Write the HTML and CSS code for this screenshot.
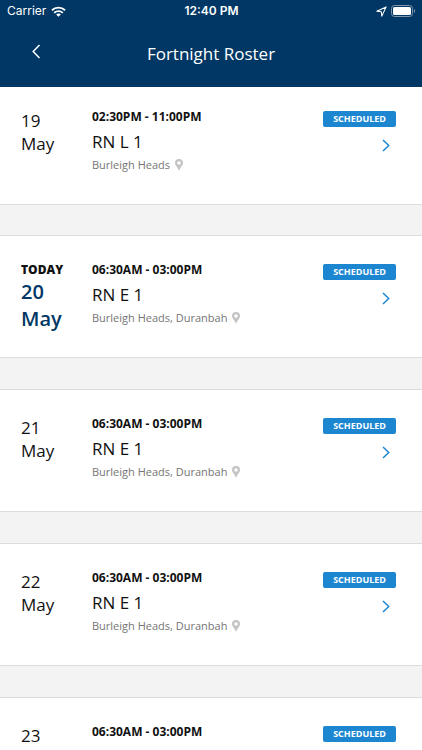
FILE: index.html
```html
<!DOCTYPE html>
<html lang="en">
<head>
<meta charset="utf-8">
<meta name="viewport" content="width=device-width, initial-scale=1">
<title>Fortnight Roster</title>
<link rel="stylesheet" href="styles.css">
</head>
<body>
<svg class="defs" aria-hidden="true">
  <symbol id="pin" viewBox="0 0 8 12"><path fill-rule="evenodd" d="M4 0a4 4 0 0 0-4 4c0 2.500 2.600 4 4 8 1.400-4 4-5.500 4-8a4 4 0 0 0-4-4zm0 2.200a1.800 1.800 0 1 1 0 3.600 1.800 1.800 0 0 1 0-3.600z"/></symbol>
  <symbol id="next" viewBox="0 0 8 13"><path d="M1 1l5.700 5.500L1 12"/></symbol>
</svg>
<header class="header">
  <div class="status">
    <div class="carrier">
      <span>Carrier</span>
      <svg class="wifi" viewBox="0 0 16 11" aria-hidden="true"><path d="M1 4.200a10.200 10.200 0 0 1 14 0M3.400 6.900a6.700 6.700 0 0 1 9.200 0"/><path class="dot" d="M5.500 8.800a3.600 3.600 0 0 1 5 0L8 11z"/></svg>
    </div>
    <span class="clock">12:40 PM</span>
    <div class="power">
      <svg class="location" viewBox="0 0 10 10" aria-hidden="true"><path d="M9.200.8L.8 4.700l4 .5.500 4z"/></svg>
      <svg class="battery" viewBox="0 0 25 12" aria-hidden="true"><rect class="shell" x=".5" y=".5" width="21" height="11" rx="3"/><rect class="charge" x="2" y="2" width="18" height="8" rx="1.500"/><path class="tip" d="M23 4c1.600.6 1.600 3.400 0 4z"/></svg>
    </div>
  </div>
  <nav class="bar">
    <button class="back" type="button" aria-label="Back"><svg viewBox="0 0 9 15" aria-hidden="true"><path d="M7.500 1L1.200 7.500l6.300 6.500"/></svg></button>
    <h1>Fortnight Roster</h1>
  </nav>
</header>
<main class="roster">
  <article class="shift">
    <div class="date"><span>19</span><span>May</span></div>
    <div class="info"><strong>02:30PM - 11:00PM</strong><h2>RN L 1</h2><p>Burleigh Heads<svg class="pin" aria-hidden="true"><use href="#pin"/></svg></p></div>
    <div class="side"><span class="badge">SCHEDULED</span><button class="open" type="button" aria-label="Open 19 May"><svg><use href="#next"/></svg></button></div>
  </article>
  <article class="shift">
    <div class="date today"><strong>TODAY</strong><span>20</span><span>May</span></div>
    <div class="info"><strong>06:30AM - 03:00PM</strong><h2>RN E 1</h2><p>Burleigh Heads, Duranbah<svg class="pin" aria-hidden="true"><use href="#pin"/></svg></p></div>
    <div class="side"><span class="badge">SCHEDULED</span><button class="open" type="button" aria-label="Open 20 May"><svg><use href="#next"/></svg></button></div>
  </article>
  <article class="shift">
    <div class="date"><span>21</span><span>May</span></div>
    <div class="info"><strong>06:30AM - 03:00PM</strong><h2>RN E 1</h2><p>Burleigh Heads, Duranbah<svg class="pin" aria-hidden="true"><use href="#pin"/></svg></p></div>
    <div class="side"><span class="badge">SCHEDULED</span><button class="open" type="button" aria-label="Open 21 May"><svg><use href="#next"/></svg></button></div>
  </article>
  <article class="shift">
    <div class="date"><span>22</span><span>May</span></div>
    <div class="info"><strong>06:30AM - 03:00PM</strong><h2>RN E 1</h2><p>Burleigh Heads, Duranbah<svg class="pin" aria-hidden="true"><use href="#pin"/></svg></p></div>
    <div class="side"><span class="badge">SCHEDULED</span><button class="open" type="button" aria-label="Open 22 May"><svg><use href="#next"/></svg></button></div>
  </article>
  <article class="shift">
    <div class="date"><span>23</span></div>
    <div class="info"><strong>06:30AM - 03:00PM</strong></div>
    <div class="side"><span class="badge">SCHEDULED</span></div>
  </article>
</main>
</body>
</html>
```
FILE: styles.css
```css
* { box-sizing: border-box; }

body {
  margin: 0;
  height: 100vh;
  display: flex;
  flex-direction: column;
  overflow: hidden;
  background: #f3f3f3;
  color: #111;
  font-family: "Open Sans", "Noto Sans", sans-serif;
}

h1, h2, p { margin: 0; font-weight: 400; }
button { padding: 0; border: 0; background: none; }
svg { display: block; fill: none; }
.defs { display: none; }

.header {
  flex: none;
  background: #003764;
  color: #fff;
  padding-bottom: 16px;
}

.status {
  display: grid;
  grid-template-columns: 1fr auto 1fr;
  align-items: center;
  height: 22px;
  padding: 0 6px 0 7px;
  font: 12px/22px Inter, "Liberation Sans", sans-serif;
}
.carrier, .power { display: flex; align-items: center; gap: 5px; }
.power { justify-content: flex-end; gap: 4px; }
.clock { font-weight: 600; }
.wifi { width: 15px; height: 11px; stroke: #fff; stroke-width: 2; }
.wifi .dot { fill: #fff; stroke: none; }
.location { width: 11px; height: 11px; stroke: #fff; stroke-linejoin: round; }
.battery { width: 25px; height: 12px; }
.shell { stroke: #8097ad; }
.charge { fill: #fff; }
.tip { fill: #8097ad; }

.bar {
  display: grid;
  grid-template-columns: 52px 1fr 52px;
  align-items: center;
  height: 49px;
  padding-top: 14px;
}
.back { justify-self: end; width: 32px; height: 32px; margin-top: -4px; }
.back svg { width: 9px; height: 15px; margin: auto; stroke: #fff; stroke-width: 1.500; }
h1 { font-size: 17px; line-height: 24px; text-align: center; }

.roster {
  flex: 1;
  min-height: 0;
  overflow-y: auto;
  scrollbar-width: none;
}
.shift {
  display: grid;
  grid-template-columns: 71px 1fr auto;
  min-height: 123px;
  margin-bottom: 31px;
  padding: 26px 26px 24px 21px;
  background: #fff;
  border: solid #dcdcdc;
  border-width: 1px 0;
}
.shift:first-child {
  min-height: 118px;
  margin-bottom: 30px;
  padding-top: 22px;
  border-top: 0;
}

.date { display: flex; flex-direction: column; font-size: 17px; line-height: 23px; }
.today { color: #003764; font-size: 20px; line-height: 27px; font-weight: 600; }
.today strong { color: #111; font-size: 12px; line-height: 16px; }

.info strong { display: block; font-size: 12px; line-height: 16px; margin-bottom: 5px; }
h2 { font-size: 17px; line-height: 24px; }
.info p {
  display: flex;
  align-items: center;
  gap: 5px;
  margin-top: 3px;
  color: #757575;
  font-size: 11px;
  line-height: 16px;
}
.pin { width: 8px; height: 12px; fill: #c4c4c4; }

.side { display: flex; flex-direction: column; align-items: flex-end; }
.badge {
  padding: 0 10px;
  margin-top: 2px;
  border-radius: 2px;
  background: #1c86d1;
  color: #fff;
  font-size: 9px;
  line-height: 16px;
  font-weight: 700;
}
.open { margin: 12px 6px 0 0; }
.open svg { width: 8px; height: 13px; stroke: #1c86d1; stroke-width: 1.500; }
```
